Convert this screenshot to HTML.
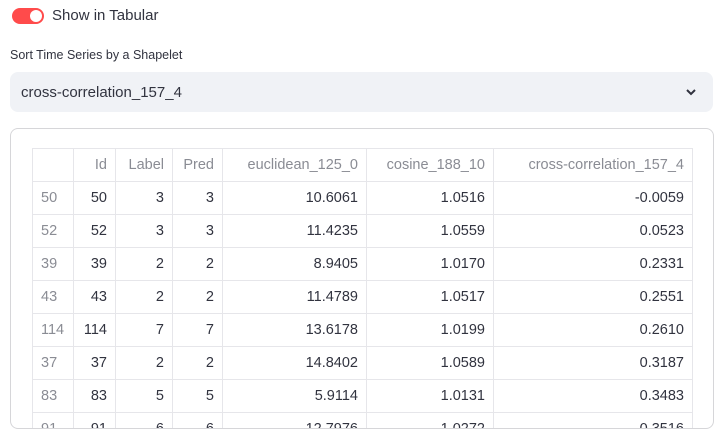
<!DOCTYPE html>
<html><head><style>
body{margin:0;background:#fff;font-family:"Liberation Sans",sans-serif;color:#31333f;width:726px;height:438px;overflow:hidden;position:relative}
.tog{position:absolute;left:12px;top:8px;width:32px;height:16px;border-radius:8px;background:#ff4b4b}
.tog:after{content:"";position:absolute;right:2px;top:2px;width:12px;height:12px;border-radius:50%;background:#fff}
.t1{position:absolute;left:52px;top:7px;font-size:15px}
.t2{position:absolute;left:10px;top:48px;font-size:12.5px}
.sel{position:absolute;left:10px;top:72px;width:703px;height:40px;border-radius:8px;background:#f0f2f6}
.sel span{position:absolute;left:11px;top:12px;font-size:15px}
.box{position:absolute;left:10px;top:128px;width:702px;height:299px;border:1px solid #d6d6d9;border-radius:8px;overflow:hidden}
table{position:absolute;left:21px;top:19px;border-collapse:collapse;font-size:14.5px}
td{border:1px solid #e6e6ea;height:33px;padding:0 8px;text-align:right;box-sizing:border-box}
tr:first-child td{color:#8a8c94}
td:first-child{text-align:left;color:#8a8c94}
</style></head><body>
<div class="tog"></div><div class="t1">Show in Tabular</div>
<div class="t2">Sort Time Series by a Shapelet</div>
<div class="sel"><span>cross-correlation_157_4</span>
<svg style="position:absolute;right:16px;top:14px" width="12" height="12" viewBox="0 0 12 12"><path d="M2 4l4 4 4-4" fill="none" stroke="#31333f" stroke-width="2"/></svg></div>
<div class="box"><table>
<tr><td style="width:41px"></td><td style="width:42px">Id</td><td style="width:57px">Label</td><td style="width:50px">Pred</td><td style="width:144px">euclidean_125_0</td><td style="width:127px">cosine_188_10</td><td style="width:199px">cross-correlation_157_4</td></tr>
<tr><td>50</td><td>50</td><td>3</td><td>3</td><td>10.6061</td><td>1.0516</td><td>-0.0059</td></tr>
<tr><td>52</td><td>52</td><td>3</td><td>3</td><td>11.4235</td><td>1.0559</td><td>0.0523</td></tr>
<tr><td>39</td><td>39</td><td>2</td><td>2</td><td>8.9405</td><td>1.0170</td><td>0.2331</td></tr>
<tr><td>43</td><td>43</td><td>2</td><td>2</td><td>11.4789</td><td>1.0517</td><td>0.2551</td></tr>
<tr><td>114</td><td>114</td><td>7</td><td>7</td><td>13.6178</td><td>1.0199</td><td>0.2610</td></tr>
<tr><td>37</td><td>37</td><td>2</td><td>2</td><td>14.8402</td><td>1.0589</td><td>0.3187</td></tr>
<tr><td>83</td><td>83</td><td>5</td><td>5</td><td>5.9114</td><td>1.0131</td><td>0.3483</td></tr>
<tr><td>91</td><td>91</td><td>6</td><td>6</td><td>12.7976</td><td>1.0272</td><td>0.3516</td></tr>
</table></div>
</body></html>
